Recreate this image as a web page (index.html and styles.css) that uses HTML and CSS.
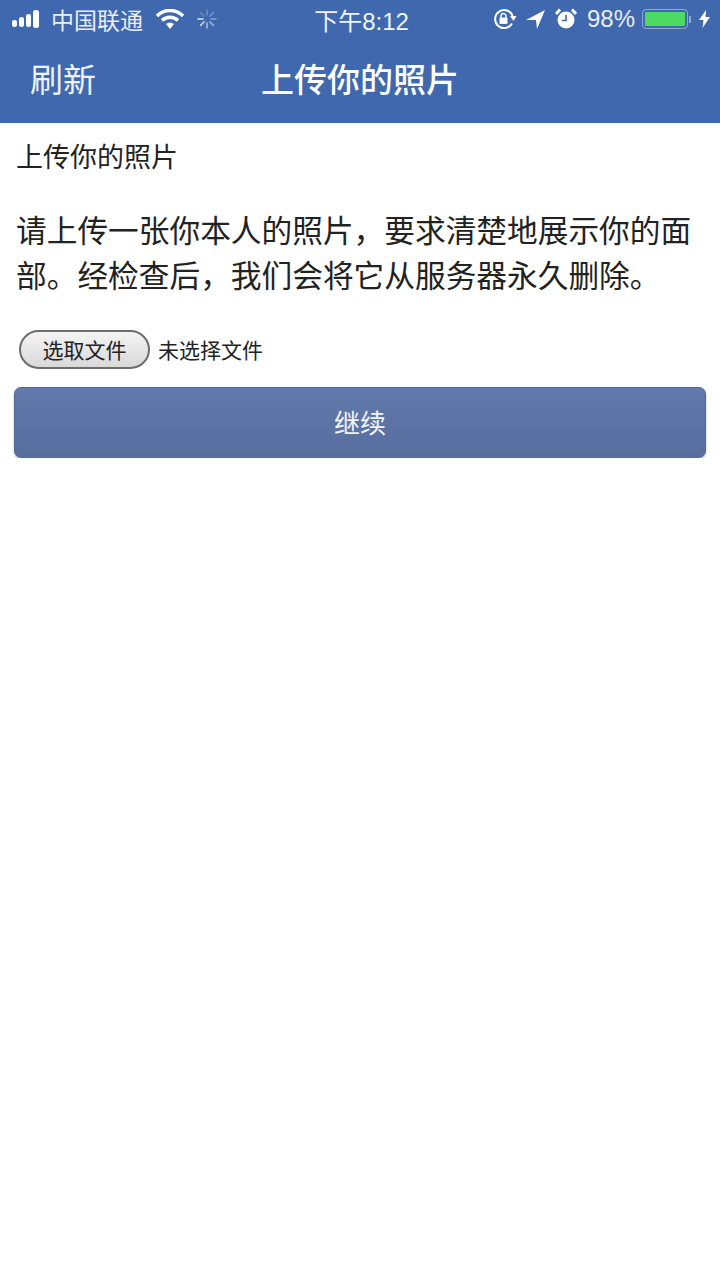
FILE: index.html
```html
<!DOCTYPE html>
<html lang="zh-CN">
<head>
    <meta charset="UTF-8">
    <title>上传你的照片</title>
    <link rel="stylesheet" href="styles.css">
</head>
<body>

    <div class="header">
        <div class="status-bar">
            <div class="status-left">
                <svg class="signal" width="33" height="18" viewBox="0 0 33 18">
                    <rect x="0" y="10" width="5" height="7" rx="2.2" fill="#fff"/>
                    <rect x="7" y="7" width="5" height="10" rx="2.2" fill="#fff"/>
                    <rect x="14" y="4" width="5" height="13" rx="2.2" fill="#fff"/>
                    <rect x="21" y="0" width="6" height="18" rx="2.5" fill="#fff"/>
                </svg>
                <span class="carrier">中国联通</span>
                <svg class="wifi" width="28" height="20" viewBox="0 0 28 20">
                    <path d="M1 7 A18 18 0 0 1 27 7" fill="none" stroke="#fff" stroke-width="3.4"/>
                    <path d="M6 11.5 A11.5 11.5 0 0 1 22 11.5" fill="none" stroke="#fff" stroke-width="3.4"/>
                    <path d="M10 15 L14 20 L18 15 A6 6 0 0 0 10 15 Z" fill="#fff"/>
                </svg>
                <svg class="spinner" width="20" height="20" viewBox="0 0 20 20" stroke="#fff" stroke-width="1.5" stroke-linecap="round">
                    <path d="M10 1V6" opacity=".25"/>
                    <path d="M16.4 3.6L12.8 7.2" opacity=".3"/>
                    <path d="M19 10H14" opacity=".4"/>
                    <path d="M16.4 16.4L12.8 12.8" opacity=".5"/>
                    <path d="M10 19V14" opacity=".6"/>
                    <path d="M3.6 16.4L7.2 12.8" opacity=".75"/>
                    <path d="M1 10H6" opacity=".85"/>
                    <path d="M3.6 3.6L7.2 7.2" opacity=".2"/>
                </svg>
            </div>
            <div class="status-time">下午8:12</div>
            <div class="status-right">
                <svg width="24" height="22" viewBox="0 0 24 22">
                    <path d="M19 15.5 A9 9 0 1 1 19.6 8" fill="none" stroke="#fff" stroke-width="2"/>
                    <path d="M17 8 L23.5 8 L20.5 13 Z" fill="#fff"/>
                    <rect x="6.5" y="9.5" width="8" height="6.5" rx="1" fill="#fff"/>
                    <path d="M8 10V8a2.5 2.5 0 0 1 5 0V10" fill="none" stroke="#fff" stroke-width="1.4"/>
                </svg>
                <svg class="arrow" width="20" height="20" viewBox="0 0 20 20">
                    <path d="M0 11 L19 1 L11 20 L10 11 Z" fill="#fff"/>
                </svg>
                <svg class="alarm" width="22" height="22" viewBox="0 0 22 22">
                    <circle cx="11" cy="12" r="8.5" fill="#fff"/>
                    <path d="M1 6 L5 1.5 M21 6 L17 1.5" stroke="#fff" stroke-width="3"/>
                    <path d="M11 7V12.5H7" fill="none" stroke="#3f68af" stroke-width="1.6"/>
                </svg>
                <span class="battery-pct">98%</span>
                <div class="battery">
                    <div class="battery-level"></div>
                </div>
                <div class="battery-tip"></div>
                <svg class="bolt" width="11" height="18" viewBox="0 0 11 18">
                    <path d="M7 0 L0 10 H4.5 L3.5 18 L11 7 H6.5 Z" fill="#fff"/>
                </svg>
            </div>
        </div>
        <div class="nav-bar">
            <span class="nav-refresh">刷新</span>
            <h1 class="nav-title">上传你的照片</h1>
        </div>
    </div>

    <div class="content">
        <h2 class="page-title">上传你的照片</h2>
        <p class="intro">请上传一张你本人的照片，要求清楚地展示你的面部。经检查后，我们会将它从服务器永久删除。</p>
        <div class="file-row">
            <button class="file-btn">选取文件</button>
            <span class="file-name">未选择文件</span>
        </div>
        <button class="continue-btn">继续</button>
    </div>

</body>
</html>
```

FILE: styles.css
```css
body {
    margin: 0;
    background-color: #fff;
    color: #222;
    font-family: "Noto Sans CJK SC", "Liberation Sans", sans-serif;
}
.header {
    height: 123px;
    background-color: #3f68af;
    color: #fff;
    display: flex;
    flex-direction: column;
}
.status-bar {
    height: 38px;
    padding: 0 12px;
    display: grid;
    grid-template-columns: 1fr auto 1fr;
    align-items: center;
    font-family: "Liberation Sans", "Noto Sans CJK SC", sans-serif;
}
.status-left {
    display: flex;
    align-items: center;
}
.carrier {
    font-size: 23px;
    margin-left: 6px;
    color: #e9eef8;
}
.wifi {
    margin-left: 13px;
}
.spinner {
    margin-left: 13px;
}
.status-time {
    font-size: 24px;
    color: #f2f5fb;
    padding-left: 3px;
}
.status-right {
    display: flex;
    align-items: center;
    justify-content: flex-end;
    margin-right: -2px;
}
.arrow {
    margin-left: 9px;
}
.alarm {
    margin-left: 9px;
}
.battery-pct {
    font-size: 24px;
    margin-left: 10px;
    color: #e9eef8;
}
.battery {
    width: 46px;
    height: 20px;
    margin-left: 7px;
    padding: 2px;
    box-sizing: border-box;
    border: 1px solid #8fa6d0;
    border-radius: 4px;
}
.battery-level {
    width: 40px;
    height: 100%;
    background-color: #4cd964;
    border-radius: 1px;
}
.battery-tip {
    width: 2px;
    height: 7px;
    margin-left: 1px;
    background-color: #8fa6d0;
}
.bolt {
    margin-left: 8px;
}
.nav-bar {
    flex: 1;
    position: relative;
    display: flex;
    align-items: center;
    justify-content: center;
    padding-bottom: 5px;
}
.nav-refresh {
    position: absolute;
    left: 30px;
    font-size: 33px;
    font-weight: 400;
    color: #eef2fa;
}
.nav-title {
    margin: 0;
    font-size: 33px;
    font-weight: 500;
}
.content {
    padding: 15px 14px 0;
}
.page-title {
    margin: 0 0 0 2px;
    font-size: 27px;
    font-weight: 400;
    line-height: 36px;
}
.intro {
    margin: 32px 0 0 2px;
    font-size: 30.7px;
    line-height: 45px;
}
.file-row {
    margin: 34px 0 0 5px;
    display: flex;
    align-items: center;
}
.file-btn {
    width: 131px;
    height: 39px;
    padding: 0 0 2px;
    border: 2px solid #6d6d6d;
    border-radius: 20px;
    background: linear-gradient(#f4f4f4, #d9d9d9);
    color: #222;
    font-family: inherit;
    font-size: 21px;
}
.file-name {
    margin-left: 8px;
    padding-bottom: 2px;
    font-size: 21px;
}
.continue-btn {
    display: block;
    width: 100%;
    height: 71px;
    margin-top: 18px;
    padding-bottom: 3px;
    border: 1px solid #56688f;
    border-radius: 7px;
    background: linear-gradient(#6279ab, #566f9f);
    box-shadow: 0 1px 2px rgba(0, 0, 0, 0.3);
    color: #f2f4f9;
    font-family: inherit;
    font-size: 26px;
}
```
